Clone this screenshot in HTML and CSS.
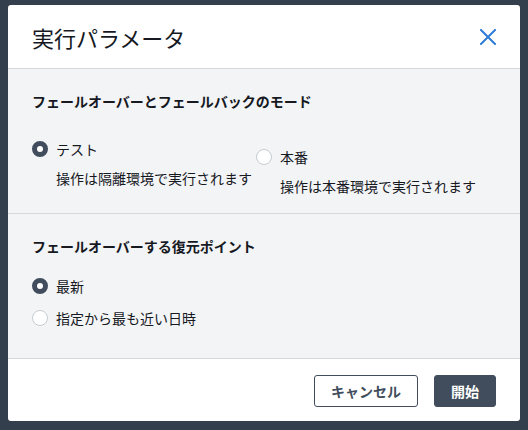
FILE: index.html
```html
<!DOCTYPE html>
<html lang="ja">
<head>
<meta charset="utf-8">
<title>実行パラメータ</title>
<link rel="stylesheet" href="styles.css">
</head>
<body>
<div class="modal">
  <header class="modal-header">
    <h1 class="modal-title">実行パラメータ</h1>
    <button class="close-btn" aria-label="閉じる">
      <svg width="16" height="16" viewBox="0 0 16 16"><path d="M1 1 L15 15 M15 1 L1 15" stroke="#2f7bd6" stroke-width="2" fill="none" stroke-linecap="square"/></svg>
    </button>
  </header>
  <div class="modal-body">
    <section class="section section-mode">
      <h2 class="section-title">フェールオーバーとフェールバックのモード</h2>
      <div class="radio-grid">
        <div class="option">
          <div class="radio-row"><span class="radio checked"></span><span class="label">テスト</span></div>
          <div class="desc">操作は隔離環境で実行されます</div>
        </div>
        <div class="option option-offset">
          <div class="radio-row"><span class="radio"></span><span class="label">本番</span></div>
          <div class="desc">操作は本番環境で実行されます</div>
        </div>
      </div>
    </section>
    <section class="section section-point">
      <h2 class="section-title">フェールオーバーする復元ポイント</h2>
      <div class="radio-list">
        <div class="radio-row"><span class="radio checked"></span><span class="label">最新</span></div>
        <div class="radio-row"><span class="radio"></span><span class="label">指定から最も近い日時</span></div>
      </div>
    </section>
  </div>
  <footer class="modal-footer">
    <button class="btn btn-normal">キャンセル</button>
    <button class="btn btn-primary">開始</button>
  </footer>
</div>
</body>
</html>
```

FILE: styles.css
```css
* { box-sizing: border-box; }
html, body { margin: 0; }
body {
  background: #343f4e;
  width: 528px;
  height: 430px;
  padding: 5px 8px 0 8px;
  font-family: "Noto Sans CJK JP", "Noto Sans", sans-serif;
  color: #16191f;
  font-size: 14px;
  overflow: hidden;
}
.modal {
  width: 512px;
  height: 416px;
  background: #fff;
  border-radius: 3px;
  display: flex;
  flex-direction: column;
  overflow: hidden;
}
.modal-header {
  height: 64px;
  flex: none;
  display: flex;
  align-items: center;
  justify-content: space-between;
  padding: 0 24px 0 24px;
  border-bottom: 1px solid #d5d9dd;
}
.modal-title {
  margin: 0;
  font-size: 22px;
  font-weight: 400;
  line-height: 28px;
  color: #16191f;
}
.close-btn {
  border: 0;
  background: none;
  padding: 0;
  width: 16px;
  height: 16px;
  display: flex;
}
.modal-body {
  background: #f3f4f6;
  border-bottom: 1px solid #d5d9dd;
  flex: none;
}
.section {
  padding: 22px 24px 0 24px;
  height: 144px;
}
.section-mode { border-bottom: 1px solid #d5d9dd; height: 145px; }
.section-title {
  margin: 0;
  font-size: 14px;
  font-weight: 700;
  line-height: 20px;
}
.radio-grid {
  display: grid;
  grid-template-columns: 224px 1fr;
  margin-top: 28px;
}
.option-offset { margin-top: 8px; }
.radio-row {
  display: flex;
  align-items: center;
  gap: 8px;
  line-height: 20px;
}
.radio {
  width: 16px;
  height: 16px;
  border-radius: 50%;
  border: 1.5px solid #c7cbd0;
  background: #fff;
  flex: none;
}
.radio.checked {
  border: 5px solid #414d5c;
  background: #fff;
}
.label { font-size: 14px; }
.desc {
  margin-top: 9px;
  padding-left: 24px;
  line-height: 20px;
}
.radio-list {
  margin-top: 20px;
  display: flex;
  flex-direction: column;
  gap: 12px;
}
.modal-footer {
  flex: 1;
  display: flex;
  justify-content: flex-end;
  align-items: flex-start;
  gap: 16px;
  padding: 16px 24px 0 0;
}
.btn {
  height: 32px;
  padding: 0 16px;
  border-radius: 3px;
  font-family: inherit;
  font-size: 14px;
  font-weight: 700;
  line-height: 20px;
}
.btn-normal {
  background: #fff;
  border: 1px solid #414d5c;
  color: #414d5c;
}
.btn-primary {
  background: #414d5c;
  border: 1px solid #414d5c;
  color: #fff;
}
```
